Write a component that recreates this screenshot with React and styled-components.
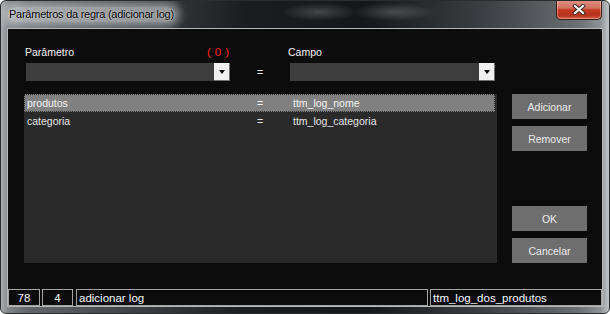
import React from "react";
import styled, { createGlobalStyle } from "styled-components";

const GlobalStyle = createGlobalStyle`
    html, body {
        margin: 0;
        padding: 0;
        background: #ffffff;
    }
    body {
        font-family: "Liberation Sans", Arial, sans-serif;
    }
    * { box-sizing: border-box; }
`;

const Window = styled.div`
    width: 610px;
    height: 314px;
    border-radius: 6px;
    border: 1px solid #2a2c2e;
    display: flex;
    flex-direction: column;
    overflow: hidden;
    background:
        radial-gradient(ellipse 38px 9px at 318px 11px, rgba(150,155,160,0.35), transparent),
        radial-gradient(ellipse 42px 9px at 393px 11px, rgba(150,155,160,0.35), transparent),
        linear-gradient(to right, #a9adb2 0, #80858a 1.2%, #64686d 4%, #45484c 18%, #1b1d20 40%, #15171a 60%, #3d4044 80%, #6a6f74 95%, #8d9297 98.6%, #c2c6ca 100%);
`;

const TitleBar = styled.div`
    height: 27px;
    display: flex;
    justify-content: space-between;
    align-items: flex-start;
    padding: 0 7px 0 7px;
`;

const Title = styled.div`
    margin-top: 6px;
    padding: 0 1px;
    font-family: "Liberation Sans", Arial, sans-serif;
    font-size: 11px;
    line-height: 15px;
    color: #000;
    letter-spacing: -0.25px;
    border-radius: 8px;
    background: rgba(225, 228, 230, 0.55);
    box-shadow: 0 0 9px 5px rgba(225, 228, 230, 0.5);
    text-shadow: 0 0 2px rgba(255,255,255,0.8);
`;

const CloseButton = styled.div`
    width: 46px;
    height: 20px;
    margin-top: -1px;
    border: 1px solid #3a1a14;
    border-top: none;
    border-radius: 0 0 5px 5px;
    background: linear-gradient(#e09284 0%, #d4705f 42%, #c53a20 52%, #b8321c 80%, #d25e42 100%);
    box-shadow: inset 0 0 0 1px rgba(255, 210, 200, 0.45);
    display: flex;
    align-items: center;
    justify-content: center;
`;

const Client = styled.div`
    margin: 0 6px 0 6px;
    height: 279px;
    border: 1px solid #b4b9be;
    background: #0c0c0c;
    display: flex;
    flex-direction: column;
`;

const Content = styled.div`
    flex: 1;
    padding: 16px 15px 0 16px;
    display: flex;
    flex-direction: column;
`;

const TopGrid = styled.div`
    margin-left: 2px;
    display: grid;
    grid-template-columns: 204px 60px 205px;
    grid-template-rows: 14px 18px;
    row-gap: 4px;
    font-size: 10.5px;
    color: #f2f2f2;
`;

const Label = styled.div`
    display: flex;
    justify-content: space-between;
    align-items: center;
    margin-left: ${(p) => p.shift || 0}px;
`;

const Count = styled.span`
    color: #ff1c1c;
    font-size: 11.5px;
    letter-spacing: 4px;
    margin-right: -3px;
`;

const Equals = styled.div`
    display: flex;
    align-items: center;
    justify-content: center;
    color: #f2f2f2;
    font-size: 10.5px;
`;

const Combo = styled.div`
    height: 18px;
    background: #3d3d3d;
    display: flex;
    justify-content: flex-end;
`;

const DropButton = styled.div`
    width: 16px;
    height: 18px;
    background: #f0f0f0;
    border-right: 1px solid #707070;
    border-bottom: 1px solid #707070;
    display: flex;
    align-items: center;
    justify-content: center;

    &::after {
        content: "";
        border-left: 3.5px solid transparent;
        border-right: 3.5px solid transparent;
        border-top: 4px solid #000;
        margin-top: 1px;
    }
`;

const MainRow = styled.div`
    margin-top: 13px;
    display: flex;
    gap: 15px;
`;

const List = styled.div`
    width: 473px;
    height: 169px;
    background: #2a2a2a;
    display: flex;
    flex-direction: column;
`;

const Row = styled.div`
    height: 18px;
    display: grid;
    grid-template-columns: 230px 36px 1fr;
    align-items: center;
    padding-left: 2px;
    margin-right: 2px;
    font-size: 10.5px;
    color: ${(p) => (p.selected ? "#f4f4f4" : "#e6e6e6")};
    background: ${(p) => (p.selected ? "#808080" : "transparent")};
    border: 1px dotted ${(p) => (p.selected ? "#2c2c2c" : "transparent")};
`;

const ButtonColumn = styled.div`
    display: flex;
    flex-direction: column;
    justify-content: space-between;
`;

const ButtonGroup = styled.div`
    display: flex;
    flex-direction: column;
    gap: 7px;
`;

const Button = styled.button`
    width: 75px;
    height: 25px;
    border: none;
    padding: 0;
    background: #6e6e6e;
    color: #ececec;
    font-family: "Liberation Sans", Arial, sans-serif;
    font-size: 10.5px;
`;

const StatusBar = styled.div`
    display: flex;
    height: 17px;
    margin-top: auto;
`;

const Cell = styled.div`
    width: ${(p) => p.w}px;
    margin-left: ${(p) => p.gap || 0}px;
    border: 1px solid #a4a4a4;
    display: flex;
    align-items: center;
    justify-content: ${(p) => (p.center ? "center" : "flex-start")};
    padding-left: ${(p) => (p.center ? 0 : 2)}px;
    font-size: 11.5px;
    color: #f4f8ff;
`;

const CloseIcon = () => (
    <svg width="14" height="11" viewBox="0 0 14 11">
        <path d="M3 2 L11 9 M11 2 L3 9" stroke="#3a2a28" strokeWidth="4" strokeLinecap="square" />
        <path d="M3 2 L11 9 M11 2 L3 9" stroke="#ffffff" strokeWidth="2.2" strokeLinecap="square" />
    </svg>
);

const rows = [
    { param: "produtos", campo: "ttm_log_nome", selected: true },
    { param: "categoria", campo: "ttm_log_categoria" },
];

const App = () => {
    return (
        <>
            <GlobalStyle />
            <Window>
                <TitleBar>
                    <Title>Parâmetros da regra (adicionar log)</Title>
                    <CloseButton><CloseIcon /></CloseButton>
                </TitleBar>
                <Client>
                    <Content>
                        <TopGrid>
                            <Label shift={-1}>
                                <span>Parâmetro</span>
                                <Count>(0)</Count>
                            </Label>
                            <div />
                            <Label shift={-2}>
                                <span>Campo</span>
                            </Label>
                            <Combo><DropButton /></Combo>
                            <Equals>=</Equals>
                            <Combo><DropButton /></Combo>
                        </TopGrid>
                        <MainRow>
                            <List>
                                {rows.map((r, i) => (
                                    <Row key={i} selected={r.selected}>
                                        <span>{r.param}</span>
                                        <span>=</span>
                                        <span>{r.campo}</span>
                                    </Row>
                                ))}
                            </List>
                            <ButtonColumn>
                                <ButtonGroup>
                                    <Button>Adicionar</Button>
                                    <Button>Remover</Button>
                                </ButtonGroup>
                                <ButtonGroup>
                                    <Button>OK</Button>
                                    <Button>Cancelar</Button>
                                </ButtonGroup>
                            </ButtonColumn>
                        </MainRow>
                    </Content>
                    <StatusBar>
                        <Cell w={32} center>78</Cell>
                        <Cell w={31} gap={2} center>4</Cell>
                        <Cell w={352} gap={3}>adicionar log</Cell>
                        <Cell w={172} gap={2}>ttm_log_dos_produtos</Cell>
                    </StatusBar>
                </Client>
            </Window>
        </>
    );
};

export default App;
